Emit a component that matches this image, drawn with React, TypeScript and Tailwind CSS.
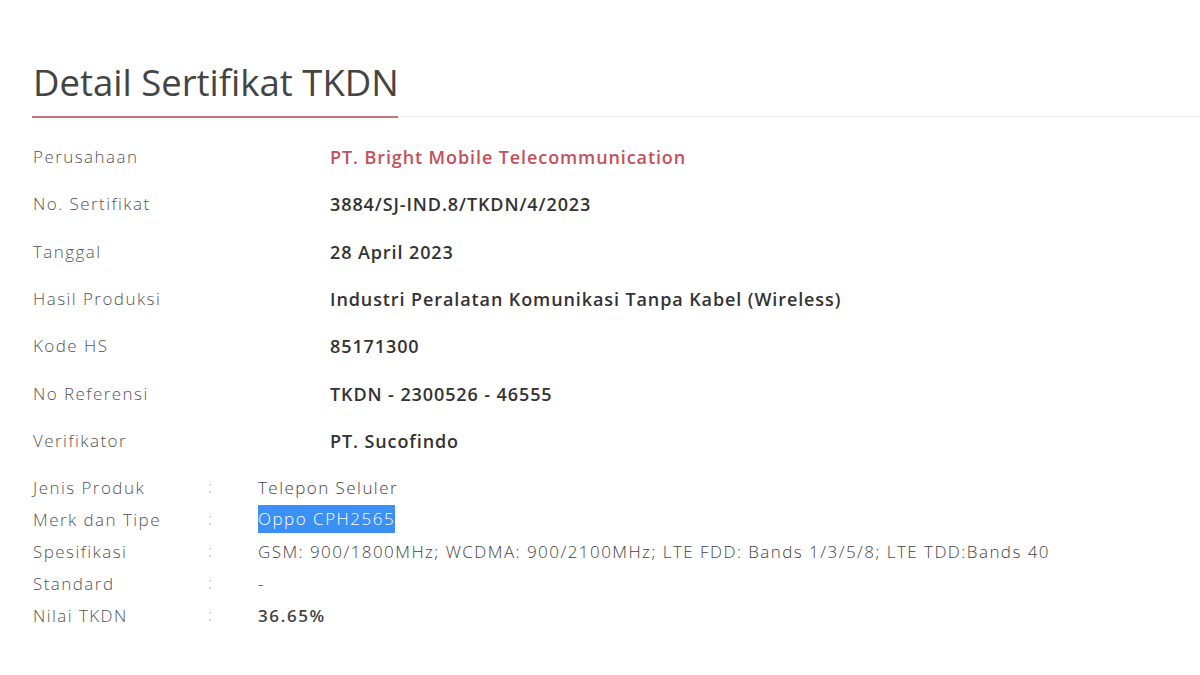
import React from 'react';

const mainRows: { label: string; value: string; accent?: boolean }[] = [
  { label: 'Perusahaan', value: 'PT. Bright Mobile Telecommunication', accent: true },
  { label: 'No. Sertifikat', value: '3884/SJ-IND.8/TKDN/4/2023' },
  { label: 'Tanggal', value: '28 April 2023' },
  { label: 'Hasil Produksi', value: 'Industri Peralatan Komunikasi Tanpa Kabel (Wireless)' },
  { label: 'Kode HS', value: '85171300' },
  { label: 'No Referensi', value: 'TKDN - 2300526 - 46555' },
  { label: 'Verifikator', value: 'PT. Sucofindo' },
];

const detailRows: { label: string; value: string; selected?: boolean; bold?: boolean }[] = [
  { label: 'Jenis Produk', value: 'Telepon Seluler' },
  { label: 'Merk dan Tipe', value: 'Oppo CPH2565', selected: true },
  {
    label: 'Spesifikasi',
    value: 'GSM: 900/1800MHz; WCDMA: 900/2100MHz; LTE FDD: Bands 1/3/5/8; LTE TDD:Bands 40',
  },
  { label: 'Standard', value: '-' },
  { label: 'Nilai TKDN', value: '36.65%', bold: true },
];

const App: React.FC = () => {
  return (
    <div className="min-h-[675px] w-[1200px] bg-white font-['Open_Sans',sans-serif] pt-[58px]">
      <div className="flex items-end">
        <div className="pl-[32px]">
          <h1 className="pl-[1px] text-[36.5px] leading-[48px] font-normal text-[#444]">
            Detail Sertifikat TKDN
          </h1>
          <div className="mt-[10px] h-[2px] w-[366px] bg-[#c8727b]" />
        </div>
        <div className="mb-[1px] h-px flex-1 bg-[#f0f0f0]" />
      </div>

      <div className="mt-[27px] flex flex-col pl-[33px]">
        {mainRows.map((row) => (
          <div key={row.label} className="flex h-[47.35px] items-start">
            <span className="w-[297px] text-[17px] leading-[24px] font-light tracking-[1.45px] text-[#555]">
              {row.label}
            </span>
            <span
              className={
                'text-[18px] leading-[24px] font-semibold tracking-[0.9px] ' +
                (row.accent ? 'text-[#c4505c]' : 'text-[#333]')
              }
            >
              {row.value}
            </span>
          </div>
        ))}
      </div>

      <div className="-mt-[5px] flex flex-col pl-[33px]">
        {detailRows.map((row) => (
          <div key={row.label} className="flex h-[32px] items-center">
            <span className="w-[175px] text-[17px] font-light tracking-[1.45px] text-[#555]">
              {row.label}
            </span>
            <span className="w-[50px] text-[16px] font-light text-[#aaa]">:</span>
            {row.selected ? (
              <span className="bg-[#3b8ff5] text-[17px] leading-[28px] font-light tracking-[1.5px] text-white">
                {row.value}
              </span>
            ) : (
              <span
                className={
                  'text-[17px] text-[#444] ' +
                  (row.bold ? 'font-semibold tracking-[1.6px]' : 'font-light tracking-[1.45px]')
                }
              >
                {row.value}
              </span>
            )}
          </div>
        ))}
      </div>
    </div>
  );
};

export default App;
